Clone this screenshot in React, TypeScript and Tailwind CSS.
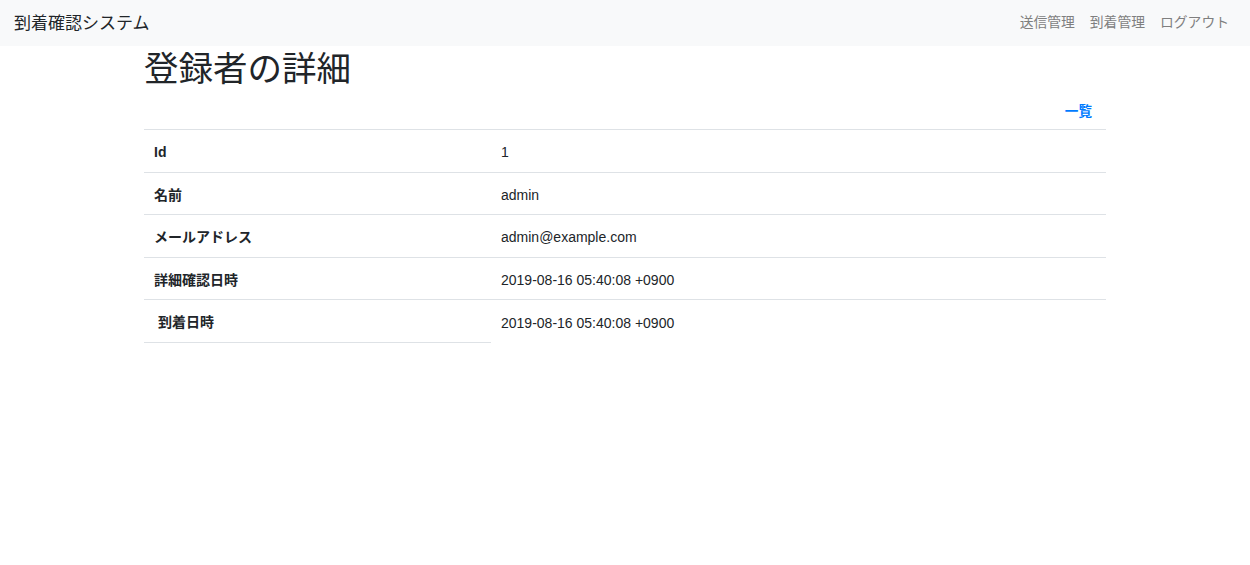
import React from 'react';

const rows: { label: string; value: string }[] = [
  { label: 'Id', value: '1' },
  { label: '名前', value: 'admin' },
  { label: 'メールアドレス', value: 'admin@example.com' },
  { label: '詳細確認日時', value: '2019-08-16 05:40:08 +0900' },
];

export default function App() {
  return (
    <div
      className="min-h-[565px] bg-white text-[#212529]"
      style={{ fontFamily: '"Liberation Sans", "Noto Sans CJK JP", sans-serif' }}
    >
      {/* Navbar */}
      <nav className="h-[46px] bg-[#f8f9fa] flex items-center justify-between pl-[14px] pr-[21px]">
        <span className="text-[17px] leading-none">到着確認システム</span>
        <div className="flex items-center gap-[15px] text-[13.8px] text-[#7f7f7f]">
          <a>送信管理</a>
          <a>到着管理</a>
          <a>ログアウト</a>
        </div>
      </nav>

      <div className="w-[962px] mx-auto">
        <h1 className="text-[34.5px] leading-[1.2] font-normal mt-[3px] mb-[5px]">登録者の詳細</h1>

        <div className="flex justify-end pr-[14px] h-[34px] items-center">
          <a className="text-[13.6px] font-bold text-[#007bff]">一覧</a>
        </div>

        <div className="text-[14px]">
          {rows.map((r) => (
            <div key={r.label} className="flex border-t border-[#dee2e6] h-[42.5px] items-center pt-[3px]">
              <div className="w-[347px] pl-[10px] font-bold">{r.label}</div>
              <div className="pl-[10px]">{r.value}</div>
            </div>
          ))}
          <div className="flex border-t border-[#dee2e6]">
            <div className="w-[347px] h-[42.5px] flex items-center pt-[3px] pl-[14px] font-bold border-b border-[#dee2e6]">
              到着日時
            </div>
            <div className="h-[42.5px] flex items-center pt-[3px] pl-[10px]">2019-08-16 05:40:08 +0900</div>
          </div>
        </div>
      </div>
    </div>
  );
}
